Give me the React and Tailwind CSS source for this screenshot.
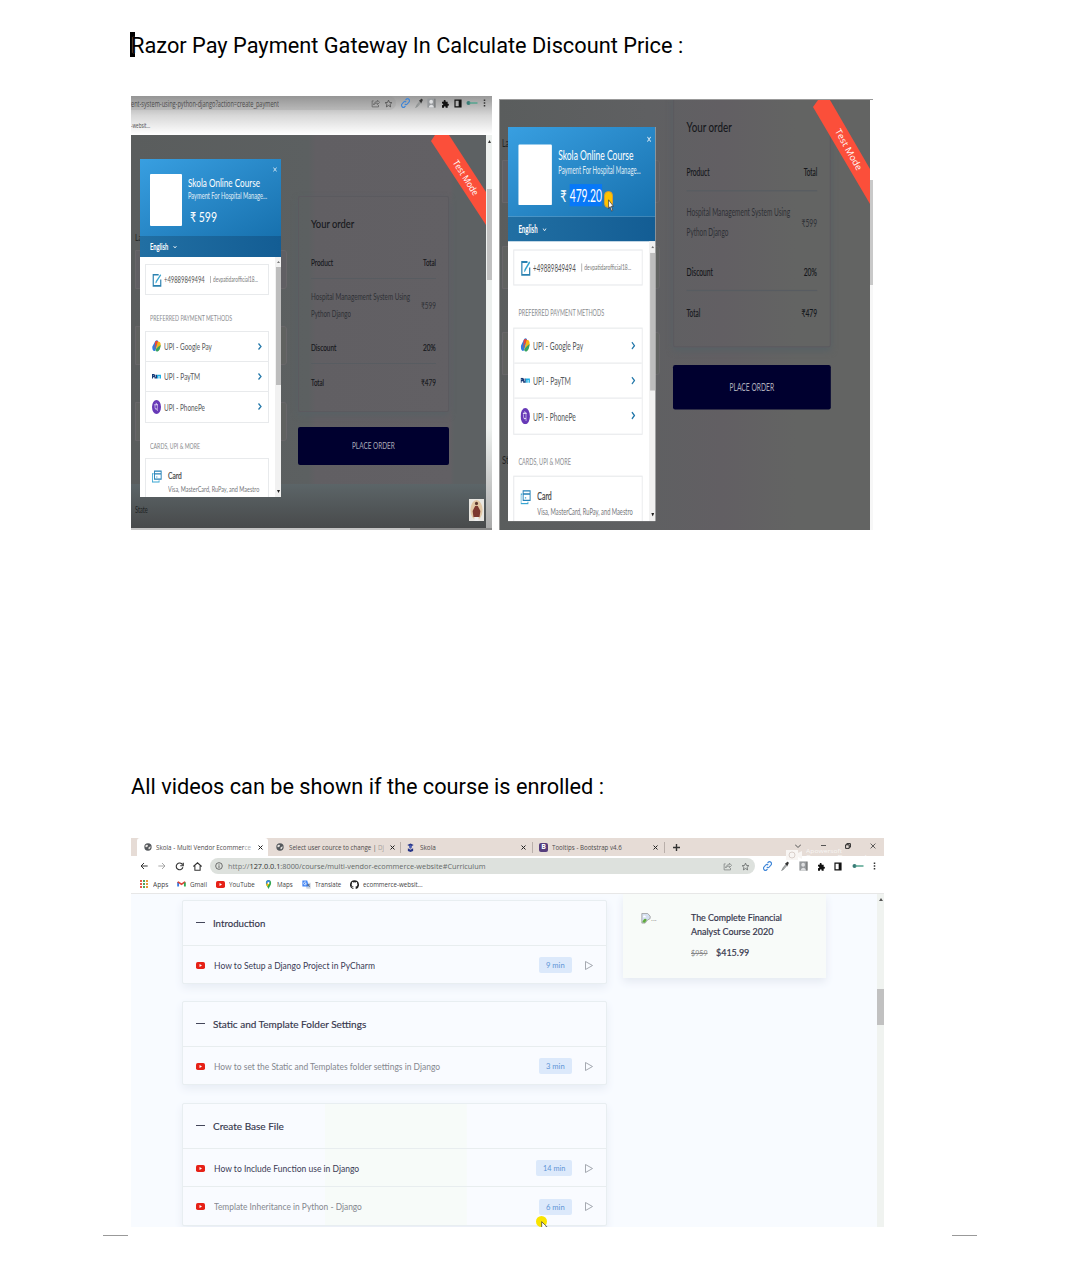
import React, { useLayoutEffect, useRef } from "react";

/* Single-line label condensed or stretched to a given width. */
function Fit({ w, className = "", children }) {
  const ref = useRef(null);
  useLayoutEffect(() => {
    const el = ref.current;
    const fit = () => {
      el.style.transform = `scaleX(${w / el.offsetWidth})`;
    };
    fit();
    document.fonts?.ready.then(fit);
  }, [w]);
  return (
    <span className={`inline-flex shrink-0 leading-none ${className}`} style={{ width: w }}>
      <span ref={ref} className="inline-block shrink-0 origin-left whitespace-pre">{children}</span>
    </span>
  );
}

const Svg = ({ className, box = "0 0 24 24", children }) => (
  <svg viewBox={box} preserveAspectRatio="none" fill="none" className={`block shrink-0 ${className}`}>{children}</svg>
);

const ShareIcon = () => (
  <Svg className="h-[9px] w-[9px] opacity-80"><path d="M7 5H3v16h17v-5M7 16c1-7 5-9 10-9V3l6 6-6 6v-4c-5 0-8 1-10 5z" stroke="currentColor" strokeWidth="2" /></Svg>
);
const StarIcon = () => (
  <Svg className="h-[9px] w-[9px]"><path d="M12 3l2.700 6.200 6.300.6-4.800 4.500 1.400 6.700-5.600-3.500L6.400 21l1.400-6.700L3 9.800l6.300-.6z" stroke="currentColor" strokeWidth="2.200" /></Svg>
);
const LinkIcon = () => (
  <Svg className="h-[10px] w-[9px]"><path d="M10 14a5 5 0 0 0 7 0l4-4a4.500 4.500 0 0 0-7-7l-2 2M14 10a5 5 0 0 0-7 0l-4 4a4.500 4.500 0 0 0 7 7l2-2" stroke="#3f86d8" strokeWidth="3" /></Svg>
);
const DropperIcon = () => (
  <Svg className="h-[10px] w-[8px]"><path d="M15 8l-9 9-3 5 4-2 10-9" stroke="#8d9191" strokeWidth="2.500" /><path d="M12 6l7 7 1-3 3-4c1-2-2-5-4-4l-4 3z" fill="#333" /></Svg>
);
const PhotoIcon = () => (
  <Svg className="h-[10px] w-[9px]"><path d="M1 1h22v22H1z" fill="#96999c" /><circle cx="11" cy="9" r="5" fill="#dedfe1" /><path d="M5 23c0-9 13-9 13 0z" fill="#dedfe1" /><path d="M21 2v21" stroke="#666" strokeWidth="2" /></Svg>
);
const PuzzleIcon = () => (
  <Svg className="h-[9px] w-[8px]"><path d="M3 7h5c-1-6 7-6 6 0h6v6c5-1 5 6 0 5v5h-6c0-5-5-5-5 0H3v-6c5 0 5-5 0-5z" fill="#111" /></Svg>
);
const PanelIcon = () => (
  <Svg className="h-[9px] w-[8px]"><path d="M3 3h18v18H3z" stroke="#111" strokeWidth="3.500" /><path d="M14 3h7v18h-7z" fill="#111" /></Svg>
);
const KeyIcon = () => (
  <Svg className="h-[6px] w-[12px]" box="0 0 24 12"><circle cx="5" cy="6" r="4" fill="#397b76" /><path d="M7 6h16" stroke="#55a48f" strokeWidth="3" /></Svg>
);
const DotsIcon = () => (
  <Svg className="h-[8px] w-[3px]" box="0 0 4 10"><path d="M1 .5h2v2H1zM1 4h2v2H1zM1 7.500h2v2H1z" fill="#333" /></Svg>
);

function CloseIcon({ className }) {
  return <Svg className={className} box="0 0 10 10"><path d="M1 1l8 8M9 1l-8 8" stroke="currentColor" strokeWidth="2" /></Svg>;
}

function Pointer({ className }) {
  return (
    <Svg className={className} box="0 0 10 16"><path d="M1 1v11l2.500-2.500L6 15l2-1-2.500-5H9z" fill="#fff" stroke="#333" strokeWidth="1" /></Svg>
  );
}

const payIcons = {
  google: (
    <Svg className="h-[12px] w-[9px]">
      <path d="M9 2c4-3 8-1 8 3l-8 16c-5 3-9-1-8-8z" fill="#2f7de1" />
      <path d="M8 4c3-4 9-3 9 2l-6 4-4 8z" fill="#e9483b" />
      <path d="M15 4c6-2 9 2 8 8l-4 8c-4 4-9 2-9-1z" fill="#f8b516" />
      <path d="M16 14l7-4c0 8-6 14-10 13-3 0-4-2-3-4z" fill="#35a365" />
    </Svg>
  ),
  paytm: (
    <Svg className="h-[5px] w-[9px]" box="0 0 18 8">
      <path d="M1 7V1h3v3H1M6 1v6M9 1v5H6" stroke="#173b78" strokeWidth="2" />
      <path d="M11 7V2h6v5M14 2v5" stroke="#19aee5" strokeWidth="2" />
    </Svg>
  ),
  phone: (
    <Svg className="h-[14px] w-[9px]">
      <ellipse cx="12" cy="12" rx="12" ry="12" fill="#6739b7" />
      <path d="M6 8h10M10 5l4 3v11M8 9v4c0 3 3 3 6 2" stroke="#ddd3f2" strokeWidth="1.800" />
    </Svg>
  ),
};

function PayRow({ icon, label, w, last }) {
  return (
    <div className={`flex h-[30px] items-center pb-[1px] pl-[6px] ${last ? "" : "border-b border-[#e8eaec]"}`}>
      {payIcons[icon]}
      <Fit w={w} className="ml-[3px] text-[10px] text-[#56585c]">{label}</Fit>
      <Svg className="mr-[6px] ml-auto h-[7px] w-[4px]" box="0 0 8 14"><path d="M1 1l5 6-5 6" stroke="#2478aa" strokeWidth="2.500" /></Svg>
    </div>
  );
}

function PaymentModal({ amount }) {
  return (
    <div className="flex h-[338px] w-[141px] flex-col overflow-hidden bg-white font-['Lato',sans-serif]">
      <div className="flex h-[77px] shrink-0 bg-linear-to-br from-[#389fe1] to-[#1771ae] pt-[15px] pl-[10px] text-white">
        <div className="h-[52px] w-[32px] rounded-[1px] bg-white" />
        <div className="ml-[6px] flex flex-col">
          <Fit w={72} className="mt-[3px] text-[12px]">Skola Online Course</Fit>
          <Fit w={79} className="mt-[2px] text-[9px] opacity-85">Payment For Hospital Manage...</Fit>
          {amount}
        </div>
        <CloseIcon className="-mt-[7px] ml-[6px] h-[5px] w-[4px] opacity-80" />
      </div>
      <div className="flex h-[21px] shrink-0 items-center bg-linear-to-r from-[#216fa3] to-[#135d94] pl-[10px] text-white">
        <Fit w={18} className="text-[9px] font-bold">English</Fit>
        <Svg className="ml-[5px] h-[4px] w-[4px]" box="0 0 8 8"><path d="M1 2l3 4 3-4" stroke="#fff" strokeWidth="1.500" /></Svg>
      </div>
      <div className="flex min-h-0 flex-1">
        <div className="w-[129px] shrink-0 overflow-hidden pl-[5px]">
          <div className="mt-[7px] flex h-[31px] items-center border border-[#e8eaec] pl-[6px]">
            <Svg className="h-[14px] w-[10px]"><path d="M16 3H3v19h18V11" stroke="#2b81b0" strokeWidth="2.800" /><path d="M10 15L21 3" stroke="#35a3cf" strokeWidth="3" /><path d="M8 18l1-4 3 2z" fill="#35a3cf" /></Svg>
            <Fit w={41} className="ml-[2px] text-[9px] text-[#555]">+49889849494</Fit>
            <span className="ml-[5px] h-[7px] w-px bg-[#bbb]" />
            <Fit w={45} className="ml-[2px] text-[7px] text-[#777]">devpatidarofficial18...</Fit>
          </div>
          <div className="flex h-[36px] items-center pt-[10px] pl-[5px]">
            <Fit w={82} className="text-[8px] text-[#8b8d90]">PREFERRED PAYMENT METHODS</Fit>
          </div>
          <div className="border border-[#e8eaec]">
            <PayRow icon="google" label="UPI - Google Pay" w={48} />
            <PayRow icon="paytm" label="UPI - PayTM" w={36} />
            <PayRow icon="phone" label="UPI - PhonePe" w={41} last />
          </div>
          <div className="flex h-[35px] items-center pt-[11px] pl-[5px]">
            <Fit w={50} className="text-[8px] text-[#8b8d90]">CARDS, UPI &amp; MORE</Fit>
          </div>
          <div className="flex h-[60px] border border-[#e8eaec] pt-[11px] pl-[6px]">
            <Svg className="h-[13px] w-[10px]"><path d="M6 2h16v15H6zM6 7h16" stroke="#2581b7" strokeWidth="2.200" /><path d="M4 7H1v15h16v-3M10 13h3" stroke="#39a5d2" strokeWidth="2" /></Svg>
            <div className="ml-[6px] flex flex-col">
              <Fit w={14} className="text-[10px] text-[#444] [-webkit-text-stroke:0.2px]">Card</Fit>
              <Fit w={91} className="mt-[5px] text-[8px] text-[#737578]">Visa, MasterCard, RuPay, and Maestro</Fit>
            </div>
          </div>
        </div>
        <div className="ml-auto flex w-[6px] flex-col items-center bg-[#f1f1f1]">
          <Svg className="my-[4px] h-[2px] w-[3px]" box="0 0 4 3"><path d="M0 3l2-3 2 3z" fill="#777" /></Svg>
          <div className="h-[118px] w-[5px] bg-[#bdbdbd]" />
          <Svg className="mt-auto mb-[4px] h-[3px] w-[3px]" box="0 0 4 3"><path d="M0 0l2 3 2-3z" fill="#222" /></Svg>
        </div>
      </div>
    </div>
  );
}

function OrderSummary() {
  return (
    <div className="w-[151px] font-['Lato',sans-serif] text-[9px] text-[#15171b]">
      <div className="h-[216px] rounded-[2px] border border-[#5b5a5f] px-[12px] shadow-[0_3px_6px_#586165]">
        <div className="flex h-[52px] items-center pt-[2px]"><Fit w={43} className="text-[12px] [-webkit-text-stroke:0.1px]">Your order</Fit></div>
        <div className="flex h-[30px] items-center justify-between border-b border-[#585c61] pb-[3px] [-webkit-text-stroke:0.120px]">
          <Fit w={22}>Product</Fit><Fit w={13}>Total</Fit>
        </div>
        <div className="flex h-[52px] items-center justify-between text-[#2f3136]">
          <div className="flex flex-col gap-[8px]">
            <Fit w={99}>Hospital Management System Using</Fit>
            <Fit w={40}>Python Django</Fit>
          </div>
          <Fit w={15} className="-ml-[4px]">₹599</Fit>
        </div>
        <div className="flex h-[33px] items-center justify-between border-b border-[#585c61] [-webkit-text-stroke:0.120px]">
          <Fit w={25}>Discount</Fit><Fit w={13}>20%</Fit>
        </div>
        <div className="flex h-[35px] items-center justify-between pt-[1px] [-webkit-text-stroke:0.120px]">
          <Fit w={13}>Total</Fit><Fit w={15}>₹479</Fit>
        </div>
      </div>
      <div className="mt-[15px] flex h-[38px] items-center justify-center rounded-[2px] bg-[#00002f] pb-[2px] text-[#aaaab7]">
        <Fit w={43} className="text-[10px]">PLACE ORDER</Fit>
      </div>
    </div>
  );
}

function FieldOutlines({ className }) {
  return (
    <div className={`flex flex-col ${className}`}>
      <div className="rounded-r-[3px] border border-[#686669] bg-[#605f63]" />
      <div className="rounded-r-[3px] border border-[#686669] bg-[#606260]" />
      <div className="rounded-r-[3px] border border-[#686669] bg-[#606260]" />
    </div>
  );
}

function LeftShot() {
  return (
    <div className="flex h-[434px] w-[361px] flex-col overflow-hidden bg-[#5e6061] font-['Open_Sans',sans-serif]">
      <div className="h-[39px] shrink-0 bg-linear-to-b from-[#999] via-[#d8d8d8] to-white text-[#4c4c4c]">
        <div className="flex h-[14px] items-center">
          <div className="flex h-full w-[265px] items-center justify-between rounded-r-full bg-[#8883] pr-[3px]">
            <Fit w={148} className="text-[9px]">ent-system-using-python-django?action=create_payment</Fit>
            <span className="flex gap-[4px]"><ShareIcon /><StarIcon /></span>
          </div>
          <div className="ml-[5px] flex flex-1 items-center justify-between pr-[6px]">
            <LinkIcon /><DropperIcon /><PhotoIcon /><PuzzleIcon /><PanelIcon /><KeyIcon /><DotsIcon />
          </div>
        </div>
        <Fit w={19} className="mt-[3px] text-[8px]">-websit...</Fit>
      </div>
      <div className="flex min-h-0 flex-1">
        <div className="relative w-[355px] overflow-hidden bg-[linear-gradient(90deg,#5a5d5d_0%,#5c6061_50%,#615f63_52%,#626064_90%,#5d6163_91%)]">
          <div className="absolute inset-x-0 bottom-0 h-[44px] bg-linear-to-b from-[#5c6568] to-[#484a4b]" />
          <FieldOutlines className="absolute top-[115px] left-[4px] w-[152px] gap-[37px] *:h-[39px]" />
          <div className="absolute top-[97px] left-[4px] flex"><Fit w={7} className="font-['Lato',sans-serif] text-[10px] text-[#222]">La</Fit></div>
          <div className="absolute top-[61px] left-[167px]"><OrderSummary /></div>
          <div className="absolute top-[369px] left-[4px] flex"><Fit w={13} className="font-['Lato',sans-serif] text-[10px] text-[#202324]">State</Fit></div>
          <div className="absolute top-[24px] left-[9px]">
            <PaymentModal amount={<Fit w={27} className="mt-[10px] ml-[2px] text-[14px]">₹ 599</Fit>} />
          </div>
          <div className="absolute top-0 right-0 h-[90px] w-[55px] bg-[#fb4f3a] [clip-path:polygon(0_6px,4px_0,18px_0,55px_57px,55px_90px)]">
            <div className="absolute top-[38px] left-[15px] flex origin-center rotate-[58deg]"><Fit w={40} className="text-[9px] text-white">Test Mode</Fit></div>
          </div>
          <div className="absolute right-[2px] bottom-[7px] flex h-[22px] w-[15px] items-center justify-center bg-[#e8e6e1]">
            <Svg className="h-[22px] w-[13px]" box="0 0 15 22"><ellipse cx="7.500" cy="11" rx="7" ry="10" fill="#e1c7a5" /><circle cx="7.500" cy="4.500" r="1.800" fill="#5c382f" /><path d="M6 7h3l3 5-1 6H4l-1-6z" fill="#7c3830" /><path d="M5 18h5v4H5z" fill="#eee" /></Svg>
          </div>
        </div>
        <div className="flex w-[6px] flex-col items-center bg-[#edf0ee]">
          <Svg className="mt-[5px] h-[3px] w-[3px]" box="0 0 4 3"><path d="M0 3l2-3 2 3z" fill="#333" /></Svg>
          <div className="mt-[46px] h-[91px] w-[5px] bg-[#c1c1c1]" />
          <div className="mt-auto h-[100px] w-full bg-linear-to-b from-transparent to-[#aaa]" />
        </div>
      </div>
      <div className="flex h-[2px] shrink-0 bg-[#888]"><div className="w-[279px] bg-[#c5c5c5]" /></div>
    </div>
  );
}

function RightShot() {
  return (
    <div className="mt-[3px] flex h-[431px] w-[374px] overflow-hidden border-t border-l border-[#999] bg-[#636463]">
      <div className="relative w-[370px] overflow-hidden bg-[linear-gradient(90deg,#5a5d5d_0%,#5f6062_40%,#625f63_60%,#636463_80%)]">
        <FieldOutlines className="absolute top-[60px] left-[2px] w-[158px] gap-[43px] *:h-[43px]" />
        <div className="absolute top-[37px] left-[2px] flex"><Fit w={7} className="font-['Lato',sans-serif] text-[11px] text-[#222]">La</Fit></div>
        <div className="absolute top-[354px] left-[2px] flex"><Fit w={7} className="font-['Lato',sans-serif] text-[11px] text-[#222]">St</Fit></div>
        <div className="absolute -top-[6px] left-[173px] origin-top-left scale-x-[1.045] scale-y-[1.173]"><OrderSummary /></div>
        <div className="absolute top-[27px] left-[8px] origin-top-left scale-x-[1.045] scale-y-[1.166]">
          <PaymentModal
            amount={
              <span className="mt-[8px] ml-[2px] flex items-center text-[14px]">
                <Fit w={6}>₹</Fit>
                <span className="ml-[3px] flex h-[19px] items-center bg-[#0878f8] pt-[1px]"><Fit w={31}>479.20</Fit></span>
              </span>
            }
          />
        </div>
        <div className="absolute top-[91px] left-[104px] h-[17px] w-[9px] rounded-full border border-[#d89a35] bg-[#ffc400]" />
        <Pointer className="absolute top-[99px] left-[108px] h-[13px] w-[6px]" />
        <div className="absolute top-0 right-0 h-[104px] w-[57px] bg-[#fb4f3a] [clip-path:polygon(0_7px,5px_0,17px_0,57px_69px,57px_104px)]">
          <div className="absolute top-[45px] left-[13px] flex origin-center rotate-[61deg]"><Fit w={46} className="font-['Open_Sans',sans-serif] text-[9px] text-white">Test Mode</Fit></div>
        </div>
      </div>
      <div className="flex flex-1 flex-col bg-white"><div className="mt-[80px] h-[105px] bg-[#c9c9c9]" /><div className="flex-1 bg-[#f7f7f7]" /></div>
    </div>
  );
}

const Globe = () => (
  <Svg className="h-[8px] w-[8px]"><circle cx="12" cy="12" r="11" fill="#54585c" /><path d="M4 8c4-5 7-2 8 0s-3 2-4 4-4 0-4-4M13 14l6-4c3 3-2 10-5 9z" fill="#e9e5e2" /></Svg>
);

function TabBar() {
  return (
    <div className="flex h-[18px] items-center bg-[#e6dcd6] pl-[6px] text-[8px] text-[#4d4b4b]">
      <div className="flex h-full w-[131px] items-center rounded-t-[3px] bg-white pl-[7px]">
        <Globe /><Fit w={95} className="ml-[4px]">Skola - Multi Vendor Ecommer<span className="text-[#aaa]">ce</span></Fit>
        <CloseIcon className="ml-[7px] h-[5px] w-[5px] text-[#222]" />
      </div>
      <div className="flex w-[132px] items-center pl-[8px]">
        <Globe /><Fit w={95} className="ml-[5px]">Select user cource to change | <span className="text-[#a49f9c]">Dj</span></Fit>
        <CloseIcon className="ml-[6px] h-[5px] w-[5px] text-[#222]" />
      </div>
      <div className="flex h-[11px] w-[132px] items-center border-l border-[#b9afaa] pl-[6px]">
        <Svg className="h-[9px] w-[7px]"><path d="M1 5l11-4 11 4-11 5z" fill="#263486" /><circle cx="12" cy="10" r="5" fill="#4b5db4" /><path d="M3 14l9 4 9-4v7l-9 3-9-3z" fill="#263486" /></Svg>
        <Fit w={16} className="ml-[6px]">Skola</Fit><CloseIcon className="mr-[6px] ml-auto h-[5px] w-[5px] text-[#222]" />
      </div>
      <div className="flex h-[11px] w-[132px] items-center border-l border-[#b9afaa] pl-[6px]">
        <span className="flex h-[9px] w-[9px] items-center justify-center rounded-[2px] bg-[#563d7c] text-[7px] font-bold text-white">B</span>
        <Fit w={70} className="ml-[4px]">Tooltips - Bootstrap v4.6</Fit><CloseIcon className="mr-[6px] ml-auto h-[5px] w-[5px] text-[#222]" />
      </div>
      <div className="flex h-[11px] items-center border-l border-[#b9afaa] pl-[8px]">
        <Svg className="h-[7px] w-[7px]" box="0 0 10 10"><path d="M5 0v10M0 5h10" stroke="#333" strokeWidth="2" /></Svg>
      </div>
      <div className="mr-[8px] mb-[3px] ml-auto flex items-center text-[#444]">
        <Svg className="mr-[20px] h-[4px] w-[6px]" box="0 0 6 4"><path d="M0 .5l3 3 3-3" stroke="#555" /></Svg>
        <span className="mr-[19px] h-px w-[5px] bg-[#555]" />
        <Svg className="mr-[19px] h-[6px] w-[6px]" box="0 0 10 10"><path d="M1 3h6v6H1zM3 3V1h6v6H7" stroke="#222" strokeWidth="1.600" /></Svg>
        <Svg className="h-[6px] w-[6px]" box="0 0 10 10"><path d="M1 1l8 8M9 1l-8 8" stroke="#444" strokeWidth="1.400" /></Svg>
      </div>
    </div>
  );
}

function AddressBar() {
  return (
    <div className="relative flex h-[21px] items-center bg-white pb-[1px]">
      <Svg className="ml-[9px] h-[8px] w-[8px]"><path d="M23 12H3M12 3l-9 9 9 9" stroke="#333" strokeWidth="3" /></Svg>
      <Svg className="ml-[10px] h-[8px] w-[8px]"><path d="M1 12h20M12 3l9 9-9 9" stroke="#999" strokeWidth="2.500" /></Svg>
      <Svg className="ml-[9px] h-[9px] w-[9px]"><path d="M20 7a9 9 0 1 0 1 7M22 2v8h-8" stroke="#333" strokeWidth="3" /></Svg>
      <Svg className="ml-[9px] h-[9px] w-[9px]"><path d="M1 12L12 2l11 10M5 10v12h14V10" stroke="#333" strokeWidth="2.800" /></Svg>
      <div className="ml-[8px] flex h-[16px] w-[545px] items-center rounded-full bg-[#dde1dd] pr-[5px] pl-[5px] text-[#656969]">
        <Svg className="h-[8px] w-[8px]"><circle cx="12" cy="12" r="10" stroke="#555" strokeWidth="2.500" /><path d="M12 10v8M12 6v2" stroke="#555" strokeWidth="2.500" /></Svg>
        <Fit w={257} className="ml-[5px] text-[8px]"><span className="text-[#747777]">http://</span><span className="text-[#303333]">127.0.0.1</span>:8000/course/multi-vendor-ecommerce-website#Curriculum</Fit>
        <span className="ml-auto flex gap-[9px]"><ShareIcon /><StarIcon /></span>
      </div>
      <div className="mr-[8px] ml-[8px] flex flex-1 items-center justify-between">
        <LinkIcon /><DropperIcon /><PhotoIcon /><PuzzleIcon /><PanelIcon /><KeyIcon /><DotsIcon />
      </div>
      <div className="absolute -top-[8px] left-[655px] flex items-center text-white/75">
        <Svg className="h-[12px] w-[17px]" box="0 0 17 12"><path d="M0 1h12v3l4-2v8l-4-2v3H0z" fill="#f8f5f3" /><circle cx="6" cy="6" r="3" stroke="#d9cfca" /></Svg>
        <span className="ml-[3px] flex flex-col"><Fit w={36} className="text-[6px]">Apowersoft</Fit><Fit w={70} className="text-[7px]">Screen Recorder</Fit></span>
      </div>
    </div>
  );
}

function Bookmarks() {
  return (
    <div className="flex h-[17px] items-center border-b border-[#e7e7e7] bg-white pb-[2px] pl-[9px] text-[7px] text-[#444]">
      <Svg className="h-[8px] w-[8px]" box="0 0 8 8"><path d="M1 0v8" stroke="#e65a48" strokeWidth="2" strokeDasharray="2 1" /><path d="M4 0v8" stroke="#50a35c" strokeWidth="2" strokeDasharray="2 1" /><path d="M7 0v8" stroke="#e69a38" strokeWidth="2" strokeDasharray="2 1" /></Svg>
      <Fit w={15} className="ml-[5px]">Apps</Fit>
      <Svg className="ml-[9px] h-[6px] w-[9px]"><path d="M3 22V4" stroke="#3b79df" strokeWidth="5" /><path d="M2 3l10 10L22 3" stroke="#dd4337" strokeWidth="5" /><path d="M21 22V6" stroke="#34a853" strokeWidth="5" /></Svg>
      <Fit w={17} className="ml-[4px]">Gmail</Fit>
      <YouTube className="ml-[9px]" />
      <Fit w={26} className="ml-[4px]">YouTube</Fit>
      <Svg className="ml-[10px] h-[9px] w-[7px]"><path d="M12 24C8 17 3 14 3 8a9 8 0 0 1 18 0c0 6-5 9-9 16z" fill="#34a853" /><path d="M4 5c4-6 10-6 14-1L6 14z" fill="#4285f4" /><path d="M4 12l8-7 3 4-7 9z" fill="#fbbc04" /><circle cx="12" cy="8" r="3" fill="#fff" /></Svg>
      <Fit w={16} className="ml-[5px]">Maps</Fit>
      <Svg className="ml-[9px] h-[9px] w-[9px]"><path d="M8 7h15v16H12z" fill="#cbd5e1" /><path d="M1 1h13l4 16H1z" fill="#4285f4" /><path d="M11 6a4 4 0 1 0 0 6V9H8" stroke="#fff" strokeWidth="2" /><path d="M14 13h7M17 12c0 3 2 5 4 6" stroke="#4b5563" strokeWidth="2" /></Svg>
      <Fit w={26} className="ml-[4px]">Translate</Fit>
      <Svg className="ml-[9px] h-[9px] w-[9px]"><path fill="#222" d="M12 .5a12 12 0 0 0-3.800 23.400c.6.1.8-.3.8-.6v-2.200c-3.300.7-4-1.500-4-1.500-.6-1.400-1.400-1.800-1.400-1.800-1-.7.1-.7.1-.7 1.200.1 1.900 1.200 1.900 1.200 1 1.800 2.800 1.300 3.500 1 .1-.8.4-1.300.8-1.600-2.700-.3-5.500-1.300-5.500-6 0-1.200.5-2.300 1.300-3.100-.2-.4-.6-1.600.1-3.200 0 0 1-.3 3.300 1.200a11.500 11.500 0 0 1 6 0c2.300-1.500 3.300-1.200 3.300-1.200.7 1.600.2 2.800.1 3.200.8.8 1.300 1.900 1.300 3.200 0 4.600-2.800 5.600-5.500 5.900.5.400.9 1.100.9 2.200v3.300c0 .3.2.7.8.6A12 12 0 0 0 12 .5z" /></Svg>
      <Fit w={60} className="ml-[4px]">ecommerce-websit...</Fit>
    </div>
  );
}

function YouTube({ className = "" }) {
  return <Svg className={`h-[7px] w-[9px] ${className}`} box="0 0 18 14"><rect width="18" height="14" rx="3.500" fill="#e62117" /><path d="M7 4l5 3-5 3z" fill="#fff" /></Svg>;
}

function Lesson({ title, w, mins, mw, visited, className }) {
  return (
    <div className={`flex items-center border-t border-[#e8edef] pt-[1px] pl-[13px] ${className}`}>
      <YouTube />
      <Fit w={w} className={`ml-[9px] text-[9px] ${visited ? "text-[#85888f]" : "text-[#3b3c56]"}`}>{title}</Fit>
      <span className="ml-auto flex h-[16px] items-center rounded-[2px] bg-[#dce9fb] px-[7px] text-[8px] text-[#6095d6]"><Fit w={mw}>{mins}</Fit></span>
      <Svg className="mr-[13px] ml-[13px] h-[9px] w-[8px]" box="0 0 16 18"><path d="M1 1v16l14-8z" stroke="#9b9fa7" strokeWidth="1.800" strokeLinejoin="round" /></Svg>
    </div>
  );
}

function Section({ title, w, className = "", children }) {
  return (
    <div className={`flex w-[425px] flex-col rounded-[2px] border border-[#e8eef1] bg-[#f9fbff] shadow-[0_4px_8px_#e8edf5] ${className}`}>
      <div className="flex h-[44px] items-center pb-[1px] pl-[13px]">
        <span className="h-px w-[9px] bg-[#44465a]" />
        <Fit w={w} className="ml-[8px] text-[10px] text-[#35364c] [-webkit-text-stroke:0.150px]">{title}</Fit>
      </div>
      {children}
    </div>
  );
}

function CoursePage() {
  return (
    <div className="flex h-[333px] overflow-hidden bg-[#f8fbff] font-['Lato',sans-serif]">
      <div className="ml-[51px] flex flex-col pt-[6px]">
        <Section title="Introduction" w={52} className="h-[84px] shrink-0">
          <Lesson title="How to Setup a Django Project in PyCharm" w={161} mins="9 min" mw={19} className="h-[38px]" />
        </Section>
        <Section title="Static and Template Folder Settings" w={153} className="mt-[17px] h-[84px] shrink-0">
          <Lesson title="How to set the Static and Templates folder settings in Django" w={226} mins="3 min" mw={19} visited className="h-[38px]" />
        </Section>
        <Section title="Create Base File" w={71} className="mt-[18px] h-[123px] shrink-0 bg-[linear-gradient(90deg,transparent_33.500%,#f7fbf9_33.600%,#f7fbf9_67%,transparent_67.100%)]">
          <Lesson title="How to Include Function use in Django" w={145} mins="14 min" mw={22} className="h-[38px]" />
          <Lesson title="Template Inheritance in Python - Django" w={148} mins="6 min" mw={19} visited className="h-[39px]" />
        </Section>
      </div>
      <div className="ml-[16px] flex h-[84px] w-[203px] bg-[#f8fbf9] pt-[18px] pl-[18px] shadow-[0_4px_8px_#e5eaf2]">
        <div className="flex h-[12px] w-[50px] items-end text-[8px] text-[#999]">
          <Svg className="h-[11px] w-[10px]"><path d="M2 1h14l6 6v5l-7 4-5 6H2z" fill="#d5e0f0" stroke="#999" strokeWidth="1.800" /><path d="M3 20c3-7 7-10 11-5l-5 6z" fill="#5eaa3a" /><path d="M5 8c1-4 6-3 7 1H5z" fill="#fff" /></Svg>...
        </div>
        <div className="flex flex-col text-[9.500px] text-[#35364c] [-webkit-text-stroke:0.2px]">
          <Fit w={91} className="mt-[1px]">The Complete Financial</Fit>
          <Fit w={82} className="mt-[4px]">Analyst Course 2020</Fit>
          <div className="mt-[12px] flex items-center"><Fit w={17} className="text-[8px] text-[#888] line-through [-webkit-text-stroke:0]">$959</Fit><Fit w={33} className="ml-[8px]">$415.99</Fit></div>
        </div>
      </div>
      <div className="ml-auto flex w-[7px] flex-col items-center bg-[#f0f3f0]">
        <Svg className="mt-[4px] h-[3px] w-[4px]" box="0 0 4 3"><path d="M0 3l2-3 2 3z" fill="#555" /></Svg>
        <div className="mt-[88px] h-[36px] w-[7px] bg-[#c1c1c1]" />
      </div>
    </div>
  );
}

export default function App() {
  return (
    <main className="flex h-[1262px] w-[1080px] flex-col overflow-hidden bg-white text-black">
      <h1 className="relative mt-[34px] ml-[131px] flex h-[24px] items-center">
        <span className="absolute -top-[2px] -left-px h-[25px] w-[5px] bg-black" />
        <Fit w={552} className="relative font-['Roboto',sans-serif] text-[22px] [text-shadow:0_0_1px_#fff]">Razor Pay Payment Gateway In Calculate Discount Price :</Fit>
      </h1>
      <div className="mt-[38px] ml-[131px] flex gap-[7px]">
        <LeftShot />
        <RightShot />
      </div>
      <h2 className="mt-[245px] ml-[131px] flex h-[24px] items-center">
        <Fit w={473} className="font-['Roboto',sans-serif] text-[22px]">All videos can be shown if the course is enrolled :</Fit>
      </h2>
      <div className="relative mt-[39px] ml-[131px] h-[389px] w-[753px] overflow-hidden font-['Open_Sans',sans-serif]">
        <TabBar />
        <AddressBar />
        <Bookmarks />
        <CoursePage />
        <div className="absolute top-[378px] left-[405px] h-[11px] w-[11px] rounded-full bg-[#f9e400]" />
        <Pointer className="absolute top-[383px] left-[410px] h-[11px] w-[7px]" />
      </div>
      <div className="mt-[8px] mr-[103px] ml-[103px] flex justify-between"><span className="h-px w-[25px] bg-[#999]" /><span className="h-px w-[25px] bg-[#999]" /></div>
    </main>
  );
}
